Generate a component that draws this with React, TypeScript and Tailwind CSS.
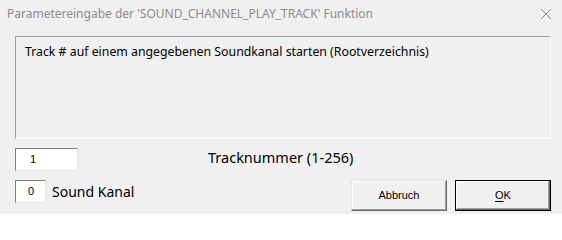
import React from "react";

export default function App() {
  return (
    <div className="w-[562px] h-[214px] bg-[#f0f0f0] overflow-hidden" style={{ fontFamily: '"Noto Sans", "Open Sans", sans-serif' }}>
      <div className="h-[27px] flex items-center justify-between pl-[7px] pr-[8px]">
        <span className="text-[12px] text-[#8c8c8c] leading-none">Parametereingabe der 'SOUND_CHANNEL_PLAY_TRACK' Funktion</span>
        <svg width="12" height="12" viewBox="0 0 12 12" className="mr-[2px]">
          <path d="M1 1 L11 11 M11 1 L1 11" stroke="#8a8a8a" strokeWidth="1" fill="none" />
        </svg>
      </div>
      <div className="pl-[15px] pr-[11px] pt-[9px]">
        <div className="h-[103px] border border-t-[#a0a0a0] border-l-[#a0a0a0] border-b-white border-r-white pl-[9px] pt-[1px]">
          <span className="text-[12.3px] text-black leading-[20px]">Track # auf einem angegebenen Soundkanal starten (Rootverzeichnis)</span>
        </div>
        <div className="mt-[9px] flex items-center h-[23px]">
          <div className="w-[63px] h-[23px] bg-white border border-t-[#838383] border-l-[#838383] border-b-[#e3e3e3] border-r-[#e3e3e3] flex items-center pl-[14px]">
            <span className="text-[11px] text-black" style={{ fontFamily: '"Liberation Sans", sans-serif' }}>1</span>
          </div>
          <span className="ml-[130px] mb-[4px] text-[14.5px] text-black leading-none">Tracknummer (1-256)</span>
        </div>
        <div className="mt-[9px] flex items-start">
          <div className="w-[31px] h-[23px] bg-white border border-t-[#838383] border-l-[#838383] border-b-[#e3e3e3] border-r-[#e3e3e3] flex items-center pl-[12px]">
            <span className="text-[11px] text-black" style={{ fontFamily: '"Liberation Sans", sans-serif' }}>0</span>
          </div>
          <span className="ml-[6px] h-[23px] flex items-center text-[14px] text-black leading-none">Sound Kanal</span>
          <div className="ml-auto flex gap-[8px]" style={{ fontFamily: '"Liberation Sans", sans-serif' }}>
            <button className="w-[96px] h-[31px] bg-[#f0f0f0] border border-t-[#e3e3e3] border-l-[#e3e3e3] border-b-[#696969] border-r-[#696969] text-[11px] text-black shadow-[inset_-1px_-1px_0_#a0a0a0,inset_1px_1px_0_#ffffff]">Abbruch</button>
            <button className="w-[96px] h-[31px] bg-[#f0f0f0] border border-black text-[11px] text-black shadow-[inset_-1px_-1px_0_#696969,inset_1px_1px_0_#ffffff,inset_-2px_-2px_0_#a0a0a0]">
              <span className="underline underline-offset-2">O</span>K
            </button>
          </div>
        </div>
      </div>
    </div>
  );
}
